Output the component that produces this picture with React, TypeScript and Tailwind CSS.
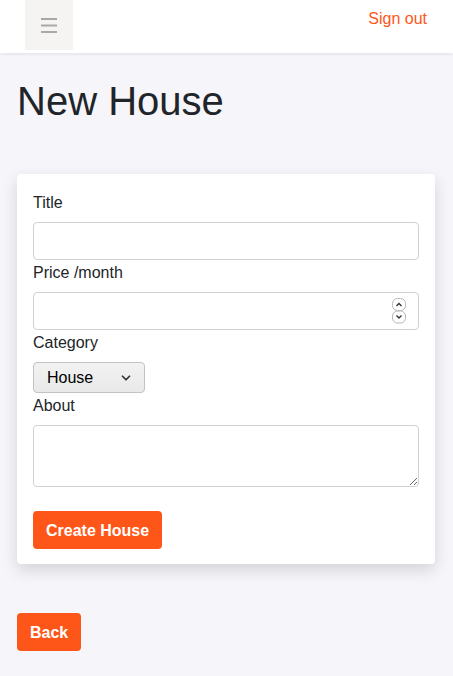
import { ChevronDown } from 'lucide-react';

const FIELD =
  'block w-full rounded-[4px] border border-[#ced1d6] bg-white px-3 py-1.5 text-base leading-6 text-[#212529] outline-none';

function Label({ children }: { children: React.ReactNode }) {
  return <label className="mb-[7px] block pt-px text-base leading-6 text-[#212529]">{children}</label>;
}

// Chrome-style spin buttons of the number field
function Spinner() {
  return (
    <svg width="14" height="26" viewBox="0 0 14 26" className="pointer-events-none absolute top-[6px] right-[13px]">
      <rect x="0.5" y="0.5" width="13" height="12" rx="5" fill="#fff" stroke="#b9b6b0" />
      <rect x="0.5" y="13" width="13" height="12" rx="5" fill="#fff" stroke="#b9b6b0" />
      <path d="M4.5 8 L7 5.5 L9.5 8" fill="none" stroke="#333" strokeWidth="1.4" />
      <path d="M4.5 17.5 L7 20 L9.5 17.5" fill="none" stroke="#333" strokeWidth="1.4" />
    </svg>
  );
}

export default function App() {
  return (
    <div className="min-h-[676px] bg-[#f6f5fa] font-['Liberation_Sans',Arial,sans-serif] text-[#212529]">
      {/* Top bar */}
      <header className="flex h-[53px] items-start justify-between bg-white pl-[25px] pr-[26px] shadow-[0_2px_3px_rgba(0,0,0,0.06)]">
        <button className="flex h-[50px] w-[48px] items-center justify-center bg-[#f5f4f2]">
          <svg width="16" height="16" viewBox="0 0 16 16" className="text-[#a8a8a8]">
            <rect x="0" y="1" width="16" height="2" fill="currentColor" />
            <rect x="0" y="7.5" width="16" height="2" fill="currentColor" />
            <rect x="0" y="14" width="16" height="2" fill="currentColor" />
          </svg>
        </button>
        <a href="#" className="mt-[7px] text-base leading-6 text-[#fe5618]">
          Sign out
        </a>
      </header>

      <main className="pl-[17px] pr-[18px]">
        <h1 className="mt-[24px] text-[40px] leading-[48px] font-normal text-[#212529]">New House</h1>

        <form className="mt-[49px] rounded-[4px] bg-white px-4 pt-4 pb-[15px] shadow-[0_6px_16px_rgba(0,0,0,0.14)]">
          <Label>Title</Label>
          <input type="text" className={`${FIELD} h-[38px]`} />

          <Label>Price /month</Label>
          <div className="relative">
            <input type="number" className={`${FIELD} h-[38px]`} />
            <Spinner />
          </div>

          <Label>Category</Label>
          <div className="relative w-[112px]">
            <select className="block h-[31px] w-full appearance-none rounded-[4px] border border-[#c2c2c2] bg-gradient-to-b from-[#f2f2f2] to-[#e9e9e9] pl-[13px] text-base text-black outline-none">
              <option>House</option>
              <option>Apartment</option>
            </select>
            <ChevronDown
              size={14}
              strokeWidth={3}
              className="pointer-events-none absolute top-[9px] right-[12px] text-[#333]"
            />
          </div>

          <Label>About</Label>
          <textarea className={`${FIELD} h-[62px]`} />

          <button
            type="button"
            className="mt-6 rounded-[4px] bg-[#fe5618] px-[13px] pt-[8px] pb-[6px] text-base leading-6 font-bold text-white"
          >
            Create House
          </button>
        </form>

        <button
          type="button"
          className="mt-[49px] rounded-[4px] bg-[#fe5618] px-[13px] pt-[8px] pb-[6px] text-base leading-6 font-bold text-white"
        >
          Back
        </button>
      </main>
    </div>
  );
}
